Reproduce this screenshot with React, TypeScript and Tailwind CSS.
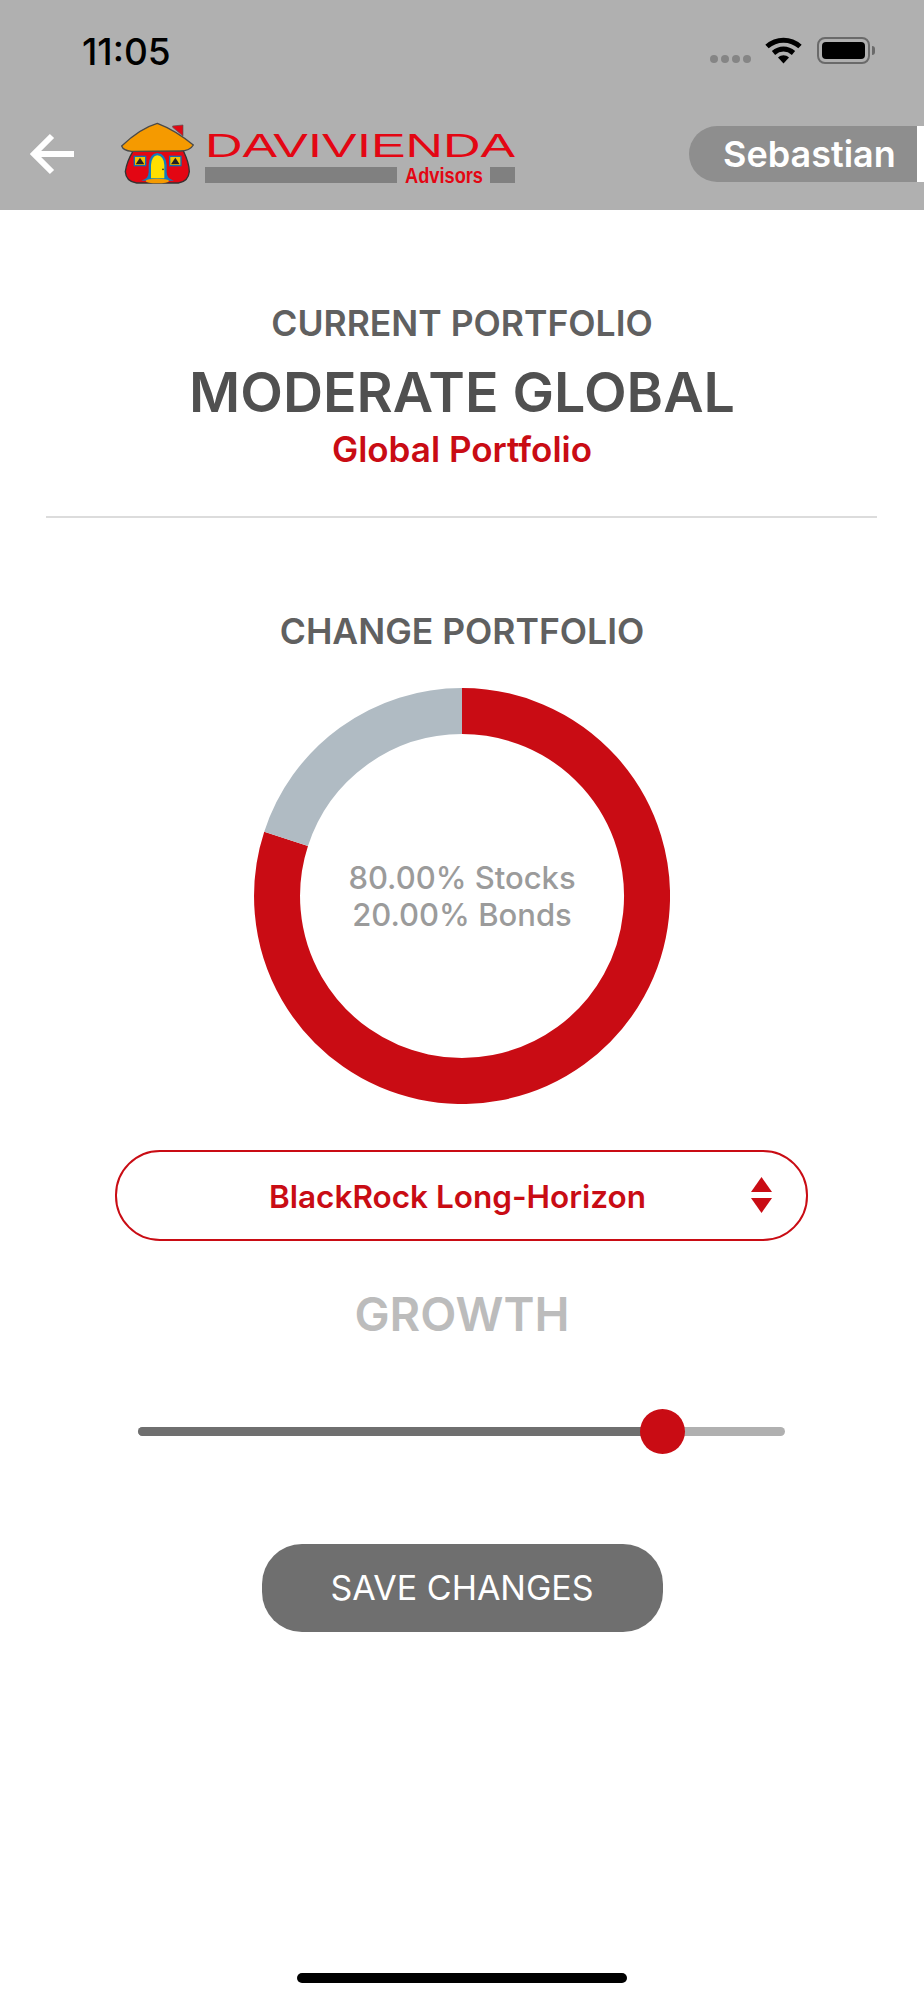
const red = "#c90c14";

function WifiIcon() {
  return (
    <svg width="37" height="27" viewBox="0 0 37 27" fill="none">
      <path d="M2 9.5C11.5 1 25.5 1 35 9.5" stroke="#000" strokeWidth="5" />
      <path d="M8.5 16C14.5 10.8 22.5 10.8 28.5 16" stroke="#000" strokeWidth="5" />
      <path d="M13 20.5C16.5 17.6 20.5 17.6 24 20.5L18.5 26.5Z" fill="#000" />
    </svg>
  );
}

function BatteryIcon() {
  return (
    <div className="flex items-center gap-[2px]">
      <div className="h-[27px] w-[53px] rounded-[8px] border-2 border-[#6a6a6a] p-[3px]">
        <div className="h-full w-full rounded-[4px] bg-black" />
      </div>
      <div className="h-[9px] w-[3px] rounded-r-full bg-[#6a6a6a]" />
    </div>
  );
}

function BackArrow() {
  return (
    <svg width="44" height="42" viewBox="0 0 44 42" fill="none" className="mt-[33px] ml-[30px] shrink-0">
      <path d="M44 21H4" stroke="#fff" strokeWidth="6" />
      <path d="M22 3L4 21L22 39" stroke="#fff" strokeWidth="6" />
    </svg>
  );
}

function Logo() {
  return (
    <svg width="394" height="67" viewBox="121 120 394 67" className="mt-[20px] ml-[47px] shrink-0">
      <g transform="translate(100 110) scale(0.3333)" stroke="none">
        <path d="M218 48L249 45L249 78L218 52Z" fill="#e30613" stroke="#555" strokeWidth="2" />
        <path d="M100 122L250 122Q268 160 268 185Q265 215 235 219L110 219Q78 215 76 185Q80 155 100 122Z" fill="#e30613" stroke="#333" strokeWidth="4" />
        <path d="M65 108Q120 55 172 40Q225 60 280 105Q270 123 240 123L95 124Q70 122 65 108Z" fill="#f59a00" stroke="#4a4a4a" strokeWidth="4" />
        <rect x="103" y="139" width="34" height="28" fill="#f2c200" stroke="#0f6fb5" strokeWidth="4" />
        <rect x="209" y="139" width="34" height="28" fill="#f2c200" stroke="#0f6fb5" strokeWidth="4" />
        <path d="M107 163L120 143L133 163Z" fill="#222" />
        <path d="M213 163L226 143L239 163Z" fill="#222" />
        <path d="M124 212Q146 205 146 188L200 188Q200 205 222 212Z" fill="#0f7cc0" />
        <path d="M146 200L146 165Q148 131 172 129Q198 131 200 165L200 200Z" fill="#0f7cc0" />
        <path d="M153 205L153 165Q155 138 172 136Q191 138 193 165L193 205Z" fill="#ffdf00" />
        <ellipse cx="172" cy="213" rx="35" ry="7" fill="#f59a00" />
        <circle cx="189" cy="178" r="2.5" fill="#222" />
      </g>
      <text x="205" y="157" fontFamily="Liberation Sans" fontSize="33" fill="#e30613" textLength="310" lengthAdjust="spacingAndGlyphs">
        DAVIVIENDA
      </text>
      <rect x="205" y="167" width="192" height="16" fill="#808080" />
      <text x="405" y="183" fontFamily="Liberation Sans" fontWeight="700" fontSize="22" fill="#e30613" textLength="78" lengthAdjust="spacingAndGlyphs">
        Advisors
      </text>
      <rect x="490" y="167" width="25" height="16" fill="#808080" />
    </svg>
  );
}

function Header() {
  return (
    <header className="h-[210px] bg-[#b0b0b0]">
      <div className="flex h-[100px] items-center pr-[49px] pl-[82px]">
        <span className="mt-[3px] text-[37px] leading-none font-medium text-black">11:05</span>
        <div className="ml-auto flex items-center">
          <div className="mt-[18px] flex gap-[3px]">
            {[0, 1, 2, 3].map((dot) => (
              <span key={dot} className="h-[8px] w-[8px] rounded-full bg-[#858585]" />
            ))}
          </div>
          <div className="ml-[14px]">
            <WifiIcon />
          </div>
          <div className="ml-[15px]">
            <BatteryIcon />
          </div>
        </div>
      </div>
      <div className="flex h-[110px] items-start">
        <BackArrow />
        <Logo />
        <div className="mt-[26px] ml-auto flex h-[56px]">
          <div className="flex w-[228px] items-center rounded-l-[28px] bg-[#8e8e8e] pl-[34px] text-[36px] font-semibold text-white">
            Sebastian
          </div>
          <div className="w-[7px] bg-white" />
        </div>
      </div>
    </header>
  );
}

function Donut() {
  return (
    <div className="relative mt-[36px] h-[416px] w-[416px]">
      <svg width="416" height="416" viewBox="0 0 416 416" fill="none">
        <path d="M208 23A185 185 0 1 1 32.1 150.8" stroke={red} strokeWidth="46" />
        <path d="M208 23A185 185 0 0 0 32.1 150.8" stroke="#b0bbc3" strokeWidth="46" />
      </svg>
      <div className="absolute inset-0 flex flex-col items-center justify-center text-[31px] leading-[37px] font-medium text-[#9b9b9b]">
        <span>80.00% Stocks</span>
        <span>20.00% Bonds</span>
      </div>
    </div>
  );
}

function Select() {
  return (
    <div className="relative mt-[46px] mr-[1px] flex h-[91px] w-[693px] items-center justify-center rounded-[45px] border-2 border-[#c90c14] pt-[2px] pr-[8px]">
      <span className="text-[31.5px] font-semibold text-[#c90c14]">BlackRock Long-Horizon</span>
      <svg width="21" height="36" viewBox="0 0 21 36" className="absolute top-[25px] right-[34px]">
        <path d="M10.5 0L21 15H0Z" fill={red} />
        <path d="M0 21H21L10.5 36Z" fill={red} />
      </svg>
    </div>
  );
}

function Slider() {
  return (
    <div className="relative mt-[67px] mr-[2px] flex h-[45px] w-[647px] items-center">
      <div className="flex h-[9px] w-full overflow-hidden rounded-full bg-[#b0b0b0]">
        <div className="w-[524px] bg-[#6f6f6f]" />
      </div>
      <div className="absolute top-0 left-[502px] h-[45px] w-[45px] rounded-full bg-[#c90c14]" />
    </div>
  );
}

export default function App() {
  return (
    <div className="flex h-[2000px] w-[924px] flex-col bg-white font-['Inter',sans-serif]">
      <Header />
      <main className="flex flex-1 flex-col items-center">
        <h2 className="mt-[94px] text-[35.5px] leading-[40px] font-semibold text-[#606060]">CURRENT PORTFOLIO</h2>
        <h1 className="mt-[16px] text-[55.5px] leading-[64px] font-semibold text-[#505050]">MODERATE GLOBAL</h1>
        <p className="mt-[5px] text-[35px] leading-[40px] font-semibold text-[#c90c14]">Global Portfolio</p>
        <div className="mt-[47px] mr-[1px] h-[2px] w-[831px] bg-[#dcdcdc]" />
        <h2 className="mt-[94px] text-[35.5px] leading-[40px] font-semibold text-[#606060]">CHANGE PORTFOLIO</h2>
        <Donut />
        <Select />
        <p className="mt-[45px] text-[47px] leading-[56px] font-semibold text-[#bcbcbc]">GROWTH</p>
        <Slider />
        <button type="button" className="mt-[90px] h-[88px] w-[401px] rounded-[40px] bg-[#6f6f6f] pb-[2px] text-[34px] text-white">
          SAVE CHANGES
        </button>
        <div className="mt-auto mb-[17px] h-[10px] w-[330px] rounded-full bg-black" />
      </main>
    </div>
  );
}
